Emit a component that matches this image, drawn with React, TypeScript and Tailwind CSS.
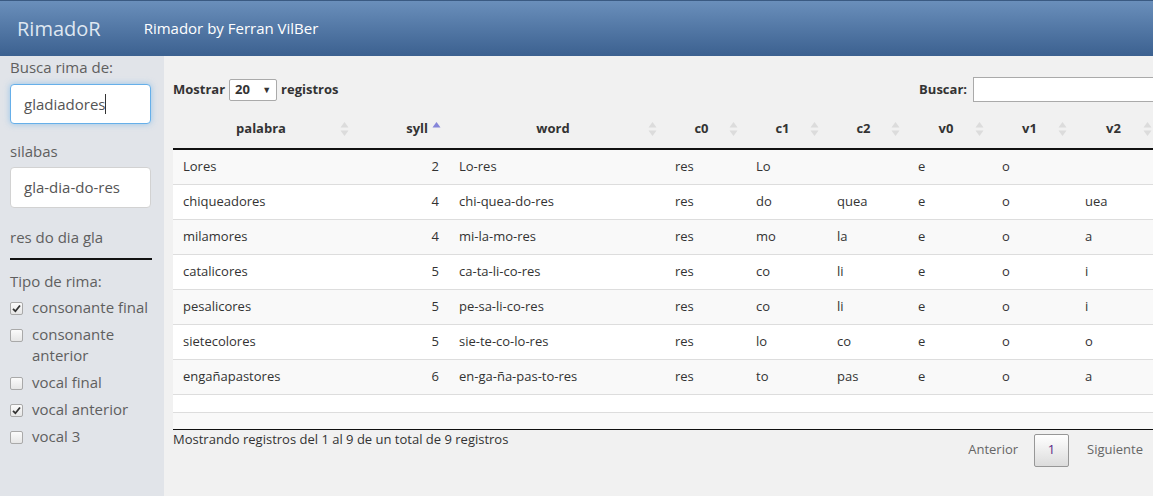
import React from "react"

type Row = string[]

const rows: Row[] = [
  ["Lores", "2", "Lo-res", "res", "Lo", "", "e", "o", ""],
  ["chiqueadores", "4", "chi-quea-do-res", "res", "do", "quea", "e", "o", "uea"],
  ["milamores", "4", "mi-la-mo-res", "res", "mo", "la", "e", "o", "a"],
  ["catalicores", "5", "ca-ta-li-co-res", "res", "co", "li", "e", "o", "i"],
  ["pesalicores", "5", "pe-sa-li-co-res", "res", "co", "li", "e", "o", "i"],
  ["sietecolores", "5", "sie-te-co-lo-res", "res", "lo", "co", "e", "o", "o"],
  ["engañapastores", "6", "en-ga-ña-pas-to-res", "res", "to", "pas", "e", "o", "a"],
]

const cols = [
  { name: "palabra", w: "w-[184px]" },
  { name: "syll", w: "w-[92px]" },
  { name: "word", w: "w-[216px]" },
  { name: "c0", w: "w-[81px]" },
  { name: "c1", w: "w-[81px]" },
  { name: "c2", w: "w-[81px]" },
  { name: "v0", w: "w-[84px]" },
  { name: "v1", w: "w-[83px]" },
  { name: "v2", w: "w-[85px]" },
]

function SortIcon({ active }: { active?: boolean }) {
  return (
    <svg width="9" height="18" viewBox="0 0 9 18" className="absolute right-[8px] top-1/2 -translate-y-1/2">
      {active ? (
        <path d="M0.5 7.5 L4.5 2 L8.5 7.5 Z" fill="#8585d9" />
      ) : (
        <>
          <path d="M0.5 7.5 L4.5 2 L8.5 7.5 Z" fill="#dcdcdc" />
          <path d="M0.5 10.5 L4.5 16 L8.5 10.5 Z" fill="#dcdcdc" />
        </>
      )}
    </svg>
  )
}

function Check({ checked, label }: { checked?: boolean; label: React.ReactNode }) {
  return (
    <div className="flex items-start gap-[9px] mb-[6px]">
      <span className="mt-[5px] w-[13px] h-[13px] shrink-0 rounded-[2px] border border-[#a9a9a9] bg-gradient-to-b from-[#fbfbfb] to-[#e6e6e6] flex items-center justify-center">
        {checked && (
          <svg width="9" height="9" viewBox="0 0 9 9">
            <path d="M1 4.8 L3.4 7.2 L8 1.5" stroke="#333" strokeWidth="1.8" fill="none" />
          </svg>
        )}
      </span>
      <span className="leading-[21px]">{label}</span>
    </div>
  )
}

export default function App() {
  return (
    <div className="w-[1153px] h-[496px] overflow-hidden flex flex-col bg-[#f1f1f1] text-[#333]" style={{ fontFamily: '"Open Sans", sans-serif' }}>
      <div className="h-[56px] shrink-0 flex items-center border-t border-[#3a5a82] bg-gradient-to-b from-[#6a8fbb] to-[#3c6190]">
        <span className="ml-[17px] text-[20px] text-[#dfe7f1]">RimadoR</span>
        <span className="ml-[43px] text-[15px] text-white">Rimador by Ferran VilBer</span>
      </div>
      <div className="flex flex-1 min-h-0">
        <div className="w-[164px] shrink-0 bg-[#e1e4e9] pl-[10px] pr-[13px] pt-[1px] text-[15px] text-[#5f5f5f]">
          <div className="leading-[21px]">Busca rima de:</div>
          <div className="mt-[6px] h-[40px] rounded-[4px] border border-[#66afe9] bg-white shadow-[0_0_6px_rgba(102,175,233,0.6)] flex items-center pl-[13px] text-[#555]">
            gladiadores<span className="w-px h-[20px] bg-[#333]" />
          </div>
          <div className="mt-[17px] leading-[21px]">silabas</div>
          <div className="mt-[5px] h-[41px] rounded-[4px] border border-[#d2d2d2] bg-white flex items-center pl-[13px] text-[#555]">
            gla-dia-do-res
          </div>
          <div className="mt-[19px] leading-[21px]">res do dia gla</div>
          <div className="mt-[10px] h-[2px] bg-[#111] w-[142px]" />
          <div className="mt-[11px] leading-[21px] mb-[5px]">Tipo de rima:</div>
          <Check checked label="consonante final" />
          <Check label={<>consonante<br />anterior</>} />
          <Check label="vocal final" />
          <Check checked label="vocal anterior" />
          <Check label="vocal 3" />
        </div>
        <div className="flex-1 min-w-0 pl-[9px] pt-[21px] text-[13px]">
          <div className="flex items-center justify-between h-[25px] font-bold">
            <div className="flex items-center gap-[4px]">
              <span>Mostrar</span>
              <span className="h-[22px] w-[48px] border border-[#aaa] bg-white rounded-[2px] flex items-center justify-between px-[5px]">
                20<span className="text-[9px]">▼</span>
              </span>
              <span>registros</span>
            </div>
            <div className="flex items-center gap-[6px] mr-[-40px]">
              <span>Buscar:</span>
              <span className="h-[25px] w-[220px] border border-[#aaa] bg-white" />
            </div>
          </div>
          <table className="mt-[8px] table-fixed border-collapse w-[987px]">
            <thead>
              <tr className="border-b-2 border-[#111]">
                {cols.map((c, i) => (
                  <th key={c.name} className={`${c.w} relative pl-[10px] h-[39px] font-bold ${i === 1 ? "text-right pr-[21px]" : "text-center pr-[18px]"}`}>
                    {c.name}
                    <SortIcon active={i === 1} />
                  </th>
                ))}
              </tr>
            </thead>
            <tbody>
              {rows.map((r, ri) => (
                <tr key={ri} className={`h-[35px] border-b border-[#ddd] ${ri % 2 === 0 ? "bg-[#f9f9f9]" : "bg-white"}`}>
                  {r.map((v, ci) => (
                    <td key={ci} className={`px-[10px] ${ci === 1 ? "text-right" : "text-left"}`}>{v}</td>
                  ))}
                </tr>
              ))}
              <tr className="h-[18px] border-b border-[#ddd] bg-white">
                {cols.map((c) => <td key={c.name} />)}
              </tr>
              <tr className="h-[17px] bg-[#f9f9f9] border-b border-[#111]">
                {cols.map((c) => <td key={c.name} />)}
              </tr>
            </tbody>
          </table>
          <div className="flex justify-between items-start w-[980px]">
            <div className="leading-[18px]">Mostrando registros del 1 al 9 de un total de 9 registros</div>
            <div className="flex items-center mt-[4px] mr-[10px]">
              <span className="text-[#666]">Anterior</span>
              <span className="ml-[16px] w-[35px] h-[33px] rounded-[2px] border border-[#979797] bg-gradient-to-b from-white to-[#dcdcdc] flex items-center justify-center text-[#5b2a86]">1</span>
              <span className="ml-[18px] text-[#666]">Siguiente</span>
            </div>
          </div>
        </div>
      </div>
    </div>
  )
}
